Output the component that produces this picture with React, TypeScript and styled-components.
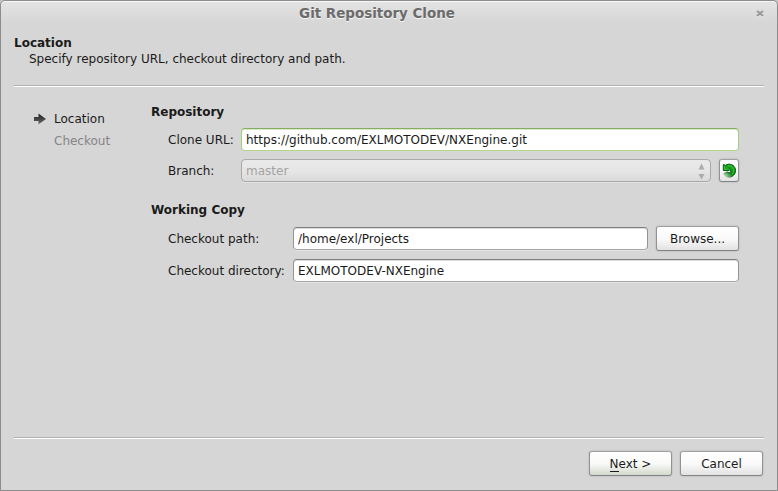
import React from "react";
import styled, { createGlobalStyle, css } from "styled-components";

const GlobalStyle = createGlobalStyle`
  html, body { margin: 0; padding: 0; }
  body { background: #c4c4c4; overflow: hidden; }
  * { box-sizing: border-box; }
`;

const Dialog = styled.div`
  width: 778px;
  height: 491px;
  display: flex;
  flex-direction: column;
  border: 1px solid #8c8c8c;
  border-radius: 5px 5px 0 0;
  background: linear-gradient(#e4e4e4, #d6d6d6 22px);
  box-shadow: inset 0 1px 0 #f8f8f8;
  color: #1a1a1a;
  font: 12px/16px "DejaVu Sans", sans-serif;
  white-space: nowrap;
`;

const TitleBar = styled.header`
  height: 25px;
  display: grid;
  grid-template-columns: 30px 1fr 30px;
  align-items: center;
  flex: none;
`;

const Title = styled.h1`
  grid-column: 2;
  margin: 0 24px 0 0;
  text-align: center;
  font-size: 13.45px;
  line-height: 24px;
  color: #6b6b6b;
  text-shadow: 0 1px 0 #f4f4f4;
`;

const CloseButton = styled.button`
  display: flex;
  padding: 1px 0 0;
  margin-left: 9px;
  border: 0;
  background: none;
`;

const PageHeader = styled.section`
  height: 59px;
  padding: 9px 13px 0;
  flex: none;
`;

const Heading = styled.h2`
  margin: 0;
  font-size: 12px;
  line-height: 16px;
`;

const Description = styled.p`
  margin: 0 0 0 15px;
`;

const Separator = styled.hr`
  width: 750px;
  height: 2px;
  margin: 0 13px;
  border: 0;
  border-top: 1px solid #b1b1b1;
  background: #fff;
  flex: none;
`;

const Body = styled.div`
  height: 350px;
  display: flex;
  flex: none;
`;

const Steps = styled.nav`
  width: 150px;
  padding: 21px 0 0 33px;
`;

const Step = styled.div<{ $active?: boolean }>`
  display: flex;
  align-items: center;
  height: 22px;
  color: ${(p) => (p.$active ? "#1a1a1a" : "#858585")};
`;

const Marker = styled.span`
  width: 20px;
  height: 12px;
  display: flex;
`;

const Form = styled.main`
  width: 588px;
  padding-top: 17px;
`;

const Group = styled.section<{ $labelWidth: number }>`
  display: grid;
  grid-template-columns: ${(p) => p.$labelWidth}px 1fr;
  row-gap: 8px;
  padding-left: 17px;
  align-items: center;
  margin-bottom: 20px;
`;

const GroupTitle = styled(Heading)`
  grid-column: 1 / -1;
  margin-left: -17px;
`;

const Controls = styled.div`
  display: flex;
  gap: 8px;
  align-items: center;
`;

const fieldShape = css`
  height: 23px;
  flex: 1;
  min-width: 0;
  border: 1px solid;
  border-radius: 4px;
  padding: 0 4px;
  font: inherit;
`;

const TextField = styled.input<{ $focused?: boolean }>`
  ${fieldShape}
  outline: none;
  background: #fff;
  color: #1a1a1a;
  border-color: ${(p) =>
    p.$focused ? "#86ad5f #a3ca7d #b0d58d #a3ca7d" : "#7e7e7e #939393 #a6a6a6 #939393"};
  box-shadow: ${(p) =>
    p.$focused
      ? "inset 0 1px 0 #d9e8cc, 0 0 1px #d5e4c8"
      : "inset 0 1px 0 #dedede, 0 1px 0 #e4e4e4"};
`;

const Dropdown = styled.div`
  ${fieldShape}
  display: flex;
  align-items: center;
  justify-content: space-between;
  padding-right: 5px;
  border-color: #a9a9a9;
  background: linear-gradient(#e9e9e9, #e6e6e6 50%, #dadada);
  box-shadow: 0 1px 0 #e2e2e2;
  color: #a3a3a3;
`;

const Button = styled.button<{ $default?: boolean; $square?: boolean }>`
  width: ${(p) => (p.$square ? 20 : 83)}px;
  height: ${(p) => (p.$square ? 23 : 25)}px;
  flex: none;
  display: flex;
  align-items: center;
  justify-content: center;
  padding: 0;
  border: 1px solid;
  border-color: #a0a0a0 #929292 #838383;
  border-radius: 3px;
  background: ${(p) =>
    p.$default
      ? "linear-gradient(#fff, #f9faf8 50%, #d3dacb)"
      : "linear-gradient(#fff, #fafafa 50%, #e2e2e2)"};
  box-shadow: 0 0 2px rgba(0, 0, 0, 0.22);
  font: inherit;
  color: #1a1a1a;
`;

const Mnemonic = styled.span`
  border-bottom: 1px solid #1a1a1a;
  line-height: 14px;
`;

const Footer = styled.footer`
  display: flex;
  justify-content: flex-end;
  gap: 8px;
  padding: 12px 14px 0 0;
`;

const CloseIcon = () => (
  <svg width="8" height="9" viewBox="0 0 8 9">
    <path d="M1 2l6 5M7 2L1 7" stroke="#f1f1f1" strokeWidth="2.200" />
    <path d="M1 1l6 5M7 1L1 6" stroke="#989898" strokeWidth="2.200" />
  </svg>
);

const ArrowIcon = () => (
  <svg width="13" height="12" viewBox="0 0 13 12">
    <defs>
      <linearGradient id="arrow" x1="0" y1="0" x2="0" y2="1">
        <stop stopColor="#202020" />
        <stop offset="1" stopColor="#666" />
      </linearGradient>
    </defs>
    <path d="M0 4h4.500V0.600L12 6 4.500 11.200V8H0z" fill="url(#arrow)" />
  </svg>
);

const SpinnerIcon = () => (
  <svg width="7" height="19" viewBox="0 0 7 19">
    <path d="M3.500 2.500L6.500 8.500h-6zM0.500 13h6l-3 5.500z" fill="#acacac" />
  </svg>
);

const RefreshIcon = () => (
  <svg width="14" height="16" viewBox="0 0 14 16">
    <defs>
      <linearGradient id="refresh" gradientUnits="userSpaceOnUse" x1="11" y1="3" x2="2" y2="13">
        <stop stopColor="#17a91f" />
        <stop offset="0.55" stopColor="#128a1a" />
        <stop offset="1" stopColor="#d3dfd2" />
      </linearGradient>
      <linearGradient id="refreshEdge" gradientUnits="userSpaceOnUse" x1="10" y1="6" x2="2" y2="13">
        <stop stopColor="#064d0d" />
        <stop offset="0.5" stopColor="#0b5911" />
        <stop offset="1" stopColor="#d3dfd2" />
      </linearGradient>
    </defs>
    <path
      d="M5 1.500C9.800.2 13.500 3.300 13.500 7.500c0 3.800-2.900 6.700-6.600 6.700-2.700 0-4.700-1.400-5.400-3.600L5.500 9c.8.900 2.200.9 2.900.1.700-.9.400-2.100-.7-2.600z"
      fill="url(#refresh)"
      stroke="url(#refreshEdge)"
    />
    <path d="M1.300 1.500l2 .8 2.400-.8L8 7.500H1.300z" fill="#16a51e" />
    <path d="M5 1.600l-1.700.7-2-.8v6h6" fill="none" stroke="#075c0c" />
    <path d="M2.400 3.200v3.200h3.200M6 3c3-.6 5.500 1.500 5.500 4.500 0 1.700-.7 3-1.900 3.800" fill="none" stroke="#3bc63e" />
  </svg>
);

export default function App() {
  return (
    <>
      <GlobalStyle />
      <Dialog>
        <TitleBar>
          <Title>Git Repository Clone</Title>
          <CloseButton aria-label="Close">
            <CloseIcon />
          </CloseButton>
        </TitleBar>
        <PageHeader>
          <Heading>Location</Heading>
          <Description>Specify repository URL, checkout directory and path.</Description>
        </PageHeader>
        <Separator />
        <Body>
          <Steps>
            <Step $active>
              <Marker>
                <ArrowIcon />
              </Marker>
              Location
            </Step>
            <Step>
              <Marker />
              Checkout
            </Step>
          </Steps>
          <Form>
            <Group $labelWidth={73}>
              <GroupTitle>Repository</GroupTitle>
              <label>Clone URL:</label>
              <Controls>
                <TextField $focused defaultValue="https://github.com/EXLMOTODEV/NXEngine.git" />
              </Controls>
              <label>Branch:</label>
              <Controls>
                <Dropdown>
                  master
                  <SpinnerIcon />
                </Dropdown>
                <Button $square aria-label="Refresh">
                  <RefreshIcon />
                </Button>
              </Controls>
            </Group>
            <Group $labelWidth={125}>
              <GroupTitle>Working Copy</GroupTitle>
              <label>Checkout path:</label>
              <Controls>
                <TextField defaultValue="/home/exl/Projects" />
                <Button>Browse...</Button>
              </Controls>
              <label>Checkout directory:</label>
              <Controls>
                <TextField defaultValue="EXLMOTODEV-NXEngine" />
              </Controls>
            </Group>
          </Form>
        </Body>
        <Separator />
        <Footer>
          <Button $default>
            <span>
              <Mnemonic>N</Mnemonic>ext &gt;
            </span>
          </Button>
          <Button>Cancel</Button>
        </Footer>
      </Dialog>
    </>
  );
}
